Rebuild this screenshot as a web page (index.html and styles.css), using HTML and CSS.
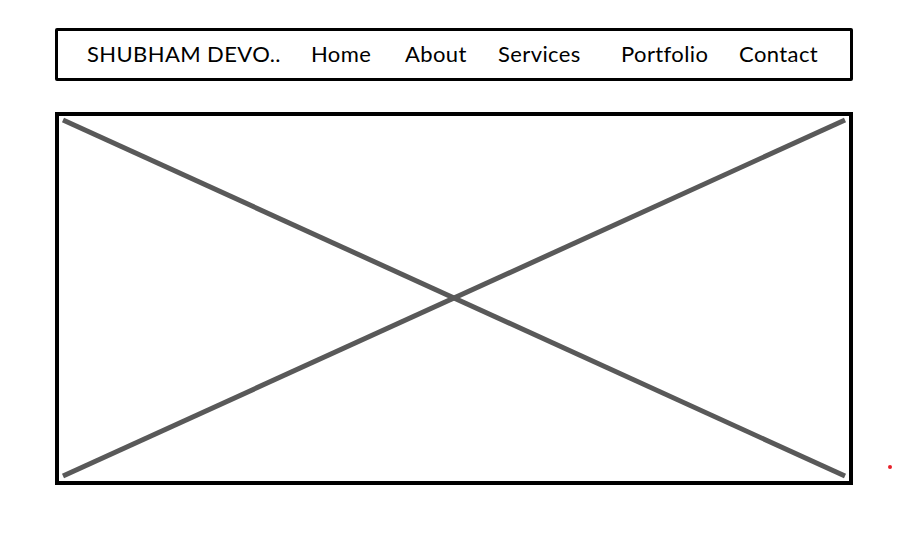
FILE: index.html
```html
<!DOCTYPE html>
<html>
<head>
<meta charset="utf-8">
<link rel="stylesheet" href="styles.css">
</head>
<body>
<div class="page">
  <nav class="nav">
    <span class="brand">SHUBHAM DEVO..</span>
    <a class="link link-home">Home</a>
    <a class="link link-about">About</a>
    <a class="link link-services">Services</a>
    <a class="link link-portfolio">Portfolio</a>
    <a class="link link-contact">Contact</a>
  </nav>
  <div class="hero">
    <svg class="cross" viewBox="0 0 790 365" preserveAspectRatio="none">
      <line x1="4" y1="4" x2="786" y2="360" />
      <line x1="4" y1="360" x2="786" y2="4" />
    </svg>
  </div>
</div>
<span class="dot"></span>
</body>
</html>
```
FILE: styles.css
```css
html, body {
  margin: 0;
  padding: 0;
  background: #fff;
}
body {
  font-family: Lato, "Noto Sans", sans-serif;
  color: #000;
  position: relative;
  width: 916px;
  height: 537px;
  overflow: hidden;
}
.page {
  padding: 28px 0 0 55px;
  width: 798px;
}
.nav {
  box-sizing: border-box;
  height: 53px;
  border: 3px solid #000;
  border-radius: 2px;
  display: flex;
  align-items: center;
  padding: 0 0 2px 29px;
  font-size: 22px;
}
.brand, .link {
  white-space: nowrap;
  color: #000;
  letter-spacing: 0.4px;
}
.brand { width: 224px; }
.link-home { width: 94px; }
.link-about { width: 93px; }
.link-services { width: 123px; }
.link-portfolio { width: 118px; }
.hero {
  box-sizing: border-box;
  margin-top: 31px;
  height: 373px;
  border: 4px solid #000;
}
.cross {
  display: block;
  width: 100%;
  height: 100%;
}
.cross line {
  stroke: #595959;
  stroke-width: 5;
}
.dot {
  position: absolute;
  left: 888px;
  top: 465px;
  width: 4px;
  height: 4px;
  border-radius: 50%;
  background: #e8202a;
}
```
